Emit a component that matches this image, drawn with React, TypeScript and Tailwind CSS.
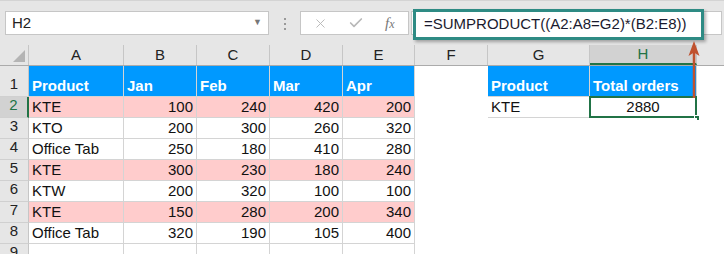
import { X, Check } from "lucide-react";

const font = "font-['Liberation_Sans',Arial,sans-serif]";

const cols = [
  { key: "A", w: "w-[95px]" },
  { key: "B", w: "w-[73px]" },
  { key: "C", w: "w-[73px]" },
  { key: "D", w: "w-[73px]" },
  { key: "E", w: "w-[72px]" },
  { key: "F", w: "w-[73px]" },
  { key: "G", w: "w-[102px]" },
  { key: "H", w: "w-[107px]" },
];

const rows: string[][] = [
  ["Product", "Jan", "Feb", "Mar", "Apr", "", "Product", "Total orders"],
  ["KTE", "100", "240", "420", "200", "", "KTE", "2880"],
  ["KTO", "200", "300", "260", "320", "", "", ""],
  ["Office Tab", "250", "180", "410", "280", "", "", ""],
  ["KTE", "300", "230", "180", "240", "", "", ""],
  ["KTW", "200", "320", "100", "100", "", "", ""],
  ["KTE", "150", "280", "200", "340", "", "", ""],
  ["Office Tab", "320", "190", "105", "400", "", "", ""],
];

const pinkRows = [1, 4, 6];

function inTable(r: number, c: number) {
  if (c <= 4) return true;
  if (c >= 6 && r <= 1) return true;
  return false;
}

function TopBar() {
  return (
    <div className="flex h-[45px] items-start border-t border-[#d4d4d4] bg-[#e6e6e6] pt-[10px]">
      <div className="ml-[5px] flex h-[24px] w-[264px] items-center justify-between border border-[#c6c6c6] bg-white pl-[6px] pr-[6px] text-[15px] text-[#222]">
        <span>H2</span>
        <span className="text-[9px] text-[#777]">▼</span>
      </div>
      <div className="flex w-[31px] flex-col items-center gap-[3px] pt-[7px]">
        <span className="h-[2px] w-[2px] bg-[#999]" />
        <span className="h-[2px] w-[2px] bg-[#999]" />
        <span className="h-[2px] w-[2px] bg-[#999]" />
      </div>
      <div className="flex h-[24px] w-[109px] items-center border border-[#c6c6c6] bg-white text-[#b8b8b8]">
        <X className="ml-[12px] h-[15px] w-[15px]" strokeWidth={1.5} />
        <Check className="ml-[20px] h-[16px] w-[16px]" strokeWidth={2.5} />
        <span className="ml-[21px] font-['Liberation_Serif',serif] text-[15px] italic text-[#777]">
          f<span className="text-[12px]">x</span>
        </span>
      </div>
      <div className="relative ml-[2px] h-[24px] flex-1 border border-[#c6c6c6] bg-white mr-[2px]">
        <div className="absolute left-[1px] top-[-3px] flex h-[31px] w-[291px] items-center border-[3px] border-[#2e8b84] bg-white pl-[8px] text-[15px] text-[#1a1a2e] shadow-[2px_2px_3px_rgba(0,0,0,0.3)]">
          =SUMPRODUCT((A2:A8=G2)*(B2:E8))
        </div>
      </div>
    </div>
  );
}

function ColumnHeader() {
  return (
    <div className="flex h-[21px] border-b border-[#ababab] bg-[#e6e6e6] text-[15px] text-[#222]">
      <div className="relative w-[29px] shrink-0 border-r border-[#c6c6c6]">
        <svg className="absolute bottom-[3px] right-[3px]" width="12" height="12" viewBox="0 0 12 12">
          <polygon points="12,0 12,12 0,12" fill="#b4b4b4" />
        </svg>
      </div>
      {cols.map((c) => (
        <div
          key={c.key}
          className={`${c.w} flex shrink-0 items-center justify-center border-r border-[#c6c6c6] ${
            c.key === "H" ? "border-b-2 border-b-[#217346] bg-[#d2d2d2] text-[#217346]" : ""
          }`}
        >
          {c.key}
        </div>
      ))}
      <div className="flex-1" />
    </div>
  );
}

function Row({ r, cells }: { r: number; cells: string[] }) {
  const header = r === 0;
  const selected = r === 1;
  const pink = pinkRows.includes(r);
  return (
    <div className={`flex ${header ? "h-[31px]" : "h-[21px]"}`}>
      <div
        className={`flex w-[29px] shrink-0 items-end justify-center border-b border-[#d0d0d0] pb-[1px] text-[15px] ${
          selected
            ? "border-r-2 border-r-[#217346] bg-[#d2d2d2] text-[#217346]"
            : "border-r border-r-[#c6c6c6] bg-[#e6e6e6] text-[#222]"
        }`}
      >
        {r + 1}
      </div>
      {cols.map((c, ci) => {
        const table = inTable(r, ci);
        const text = cells[ci];
        let bg = "bg-white";
        if (table && header) bg = "bg-[#0099ff]";
        else if (table && pink && ci <= 4) bg = "bg-[#ffcccc]";
        const numeric = /^\d+$/.test(text);
        const align = ci === 7 && !header ? "justify-center" : numeric ? "justify-end" : "justify-start";
        return (
          <div
            key={c.key}
            className={`${c.w} relative flex shrink-0 items-end ${align} border-b border-r px-[3px] pb-[1px] text-[15px] leading-[19px] ${
              table ? "border-[#d4d4d4]" : "border-transparent"
            } ${bg} ${header ? "font-bold text-white" : "text-[#111]"}`}
          >
            {text}
            {selected && ci === 7 && (
              <>
                <div className="absolute -left-px -top-px bottom-[-1px] right-[-1px] border-2 border-[#217346]" />
                <div className="absolute bottom-[-4px] right-[-4px] h-[6px] w-[6px] border border-white bg-[#217346]" />
              </>
            )}
          </div>
        );
      })}
      <div className="flex-1 bg-white" />
    </div>
  );
}

export default function App() {
  return (
    <div className={`relative h-[254px] w-[724px] overflow-hidden bg-white ${font}`}>
      <TopBar />
      <ColumnHeader />
      {rows.map((cells, r) => (
        <Row key={r} r={r} cells={cells} />
      ))}
      <Row r={8} cells={["", "", "", "", "", "", "", ""]} />
      <svg className="absolute left-[686px] top-[40px]" width="16" height="58" viewBox="0 0 16 58">
        <line x1="8" y1="10" x2="8" y2="58" stroke="#c0522f" strokeWidth="2.5" />
        <polygon points="8,1 13.5,16 8,12.5 2.5,16" fill="#c0522f" />
      </svg>
    </div>
  );
}
